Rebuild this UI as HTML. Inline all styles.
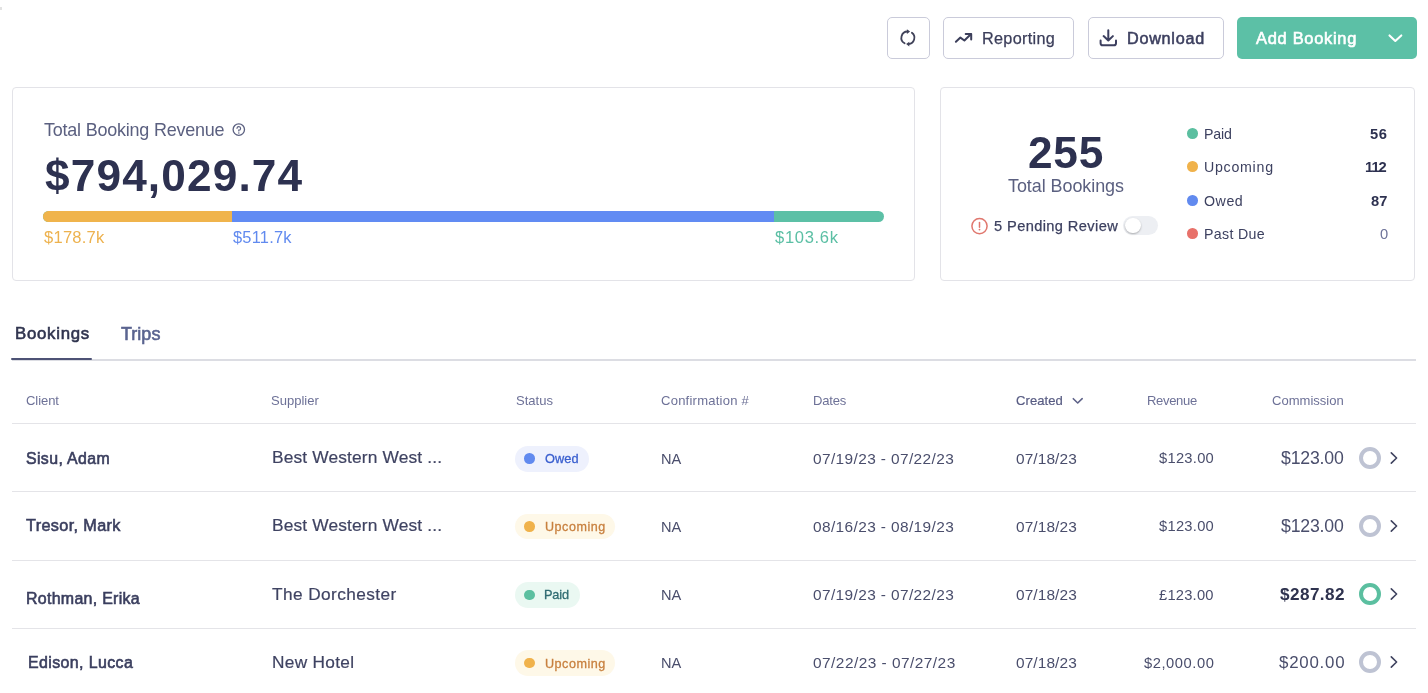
<!DOCTYPE html>
<html><head><meta charset="utf-8"><style>
html,body{margin:0;padding:0;background:#fff;width:1428px;height:693px;overflow:hidden;position:relative}
body{font-family:"Liberation Sans",sans-serif}
.t{position:absolute;white-space:pre;font-family:"Liberation Sans",sans-serif;will-change:transform}
.btn{position:absolute;box-sizing:border-box;border:1.3px solid #CACBDA;border-radius:5px;background:#fff}
.card{position:absolute;box-sizing:border-box;border:1.2px solid #E3E3E8;border-radius:4px;background:#fff}
.dot{position:absolute;border-radius:50%}
.pill{position:absolute;border-radius:13px}
.ring{position:absolute;box-sizing:border-box;width:21.9px;height:21.9px;border-radius:50%;border:4.2px solid #BEC3D3}
.hl{position:absolute;left:12px;width:1404px;height:1px;background:#E4E4E8}
svg{position:absolute;overflow:visible}
</style></head><body>
<div style="position:absolute;left:0;top:7px;width:1.5px;height:3px;background:#E2E2E2"></div>
<div class="btn" style="left:887px;top:17px;width:43px;height:42px"></div>
<svg style="left:896px;top:26px" width="26" height="24" viewBox="0 0 26 24"><g fill="none" stroke="#404259" stroke-width="1.8" stroke-linecap="round"><path d="M8.6 17.3 A6.3 6.3 0 0 1 11.6 5.5"/><path d="M15.9 6.8 A6.3 6.3 0 0 1 12.6 18.1"/></g><path d="M10.9 3.2 L14.1 5.5 L10.9 7.9 Z" fill="#404259"/><path d="M13.3 15.7 L10.1 18.0 L13.3 20.4 Z" fill="#404259"/></svg>
<div class="btn" style="left:943px;top:17px;width:131px;height:42px"></div>
<svg style="left:950px;top:26px" width="30" height="24" viewBox="0 0 30 24"><path d="M5.9 15.8 L10.4 11.6 L14.4 14.5 L20.8 8.3" fill="none" stroke="#3B3E5A" stroke-width="2" stroke-linecap="round" stroke-linejoin="round"/><path d="M15.7 7.9 L21.2 7.9 L21.2 13.4" fill="none" stroke="#3B3E5A" stroke-width="2" stroke-linecap="round" stroke-linejoin="round"/></svg>
<div class="btn" style="left:1088px;top:17px;width:136px;height:42px"></div>
<svg style="left:1095px;top:24px" width="28" height="28" viewBox="0 0 28 28"><path d="M13.3 6.2 L13.3 16.1 M8.6 12.1 L13.3 16.5 L17.9 12.1" fill="none" stroke="#3C3F5F" stroke-width="2" stroke-linecap="round" stroke-linejoin="round"/><path d="M5.6 16.4 L5.6 19.2 Q5.6 21.3 7.7 21.3 L18.9 21.3 Q21 21.3 21 19.2 L21 16.4" fill="none" stroke="#3C3F5F" stroke-width="2" stroke-linecap="round" stroke-linejoin="round"/></svg>
<div style="position:absolute;left:1237px;top:17px;width:180px;height:42px;border-radius:5px;background:#5CC0A6"></div>
<svg style="left:1380px;top:26px" width="30" height="24" viewBox="0 0 30 24"><path d="M9.5 9.4 L15.3 14.9 L21.3 9.4" fill="none" stroke="#fff" stroke-width="2.1" stroke-linecap="round" stroke-linejoin="round"/></svg>

<div class="card" style="left:12px;top:87px;width:903px;height:194px"></div>
<div class="card" style="left:940px;top:87px;width:475px;height:194px"></div>
<svg style="left:232px;top:123px" width="14" height="14" viewBox="0 0 14 14"><circle cx="6.8" cy="6.6" r="5.7" fill="none" stroke="#5B6080" stroke-width="1.3"/><path d="M5.0 5.3 A1.8 1.8 0 1 1 6.8 7.2 L6.8 8.0" fill="none" stroke="#5B6080" stroke-width="1.2" stroke-linecap="round"/><circle cx="6.8" cy="9.9" r="0.75" fill="#5B6080"/></svg>
<div style="position:absolute;left:43px;top:211.2px;width:841px;height:10.5px;border-radius:6px;overflow:hidden;background:#5CC0A6">
<div style="position:absolute;left:0;top:0;width:189px;height:100%;background:#F0B44C"></div>
<div style="position:absolute;left:189px;top:0;width:542px;height:100%;background:#618BF3"></div>
</div>
<svg style="left:970px;top:217px" width="19" height="19" viewBox="0 0 19 19"><circle cx="9.5" cy="9.1" r="7.6" fill="none" stroke="#E0776E" stroke-width="1.5"/><path d="M9.5 5.4 L9.5 10.2" stroke="#E0776E" stroke-width="1.5" stroke-linecap="round"/><circle cx="9.5" cy="12.6" r="0.9" fill="#E0776E"/></svg>
<div style="position:absolute;left:1123.3px;top:215.6px;width:34.5px;height:19px;border-radius:10px;background:#EDEFF3"></div>
<div style="position:absolute;left:1125.2px;top:217.5px;width:15.4px;height:15.4px;border-radius:50%;background:#fff;box-shadow:0 1px 2px rgba(0,0,0,0.28)"></div>

<div style="position:absolute;left:12px;top:358.6px;width:1404px;height:2px;background:#DCDDE3"></div>
<div style="position:absolute;left:11.2px;top:358.1px;width:80.9px;height:2.4px;border-radius:1.2px;background:#4D5275"></div>
<svg style="left:1060px;top:390px" width="30" height="20" viewBox="0 0 30 20"><path d="M13.3 8.7 L17.7 13.0 L22.2 8.7" fill="none" stroke="#5E6288" stroke-width="1.6" stroke-linecap="round" stroke-linejoin="round"/></svg>
<div class="hl" style="top:423px"></div><div class="hl" style="top:491px"></div><div class="hl" style="top:560px"></div><div class="hl" style="top:628px"></div>
<div class="dot" style="left:1186.9px;top:128.0px;width:10.7px;height:10.7px;background:#5BBFA0"></div><div class="dot" style="left:1186.9px;top:161.4px;width:10.7px;height:10.7px;background:#F0B24B"></div><div class="dot" style="left:1186.9px;top:194.9px;width:10.7px;height:10.7px;background:#618AEF"></div><div class="dot" style="left:1186.9px;top:228.2px;width:10.7px;height:10.7px;background:#E8716A"></div><div class="pill" style="left:514.7px;top:446.0px;width:74.4px;height:25.5px;background:#EEF1FD"></div><div class="dot" style="left:524.3px;top:453.4px;width:10.6px;height:10.6px;background:#618AEF"></div><div class="ring" style="left:1358.65px;top:446.95px;border-color:#BEC3D3"></div><svg style="left:1386px;top:447.9px" width="16" height="20" viewBox="0 0 16 20"><path d="M5.3 4.9 L10.6 10 L5.3 15.1" fill="none" stroke="#3F435F" stroke-width="1.6" stroke-linecap="round" stroke-linejoin="round"/></svg><div class="pill" style="left:515.0px;top:513.6px;width:100.0px;height:25.6px;background:#FEF8E8"></div><div class="dot" style="left:524.3px;top:521.1px;width:10.6px;height:10.6px;background:#F0B24B"></div><div class="ring" style="left:1358.65px;top:514.95px;border-color:#BEC3D3"></div><svg style="left:1386px;top:515.9px" width="16" height="20" viewBox="0 0 16 20"><path d="M5.3 4.9 L10.6 10 L5.3 15.1" fill="none" stroke="#3F435F" stroke-width="1.6" stroke-linecap="round" stroke-linejoin="round"/></svg><div class="pill" style="left:515.3px;top:582.0px;width:64.7px;height:25.6px;background:#EAF8F2"></div><div class="dot" style="left:524.3px;top:589.5px;width:10.6px;height:10.6px;background:#5BBFA0"></div><div class="ring" style="left:1358.65px;top:583.25px;border-color:#5BBFA0"></div><svg style="left:1386px;top:584.2px" width="16" height="20" viewBox="0 0 16 20"><path d="M5.3 4.9 L10.6 10 L5.3 15.1" fill="none" stroke="#3F435F" stroke-width="1.6" stroke-linecap="round" stroke-linejoin="round"/></svg><div class="pill" style="left:515.0px;top:650.0px;width:100.0px;height:25.6px;background:#FEF8E8"></div><div class="dot" style="left:524.3px;top:657.5px;width:10.6px;height:10.6px;background:#F0B24B"></div><div class="ring" style="left:1358.65px;top:651.35px;border-color:#BEC3D3"></div><svg style="left:1386px;top:652.3px" width="16" height="20" viewBox="0 0 16 20"><path d="M5.3 4.9 L10.6 10 L5.3 15.1" fill="none" stroke="#3F435F" stroke-width="1.6" stroke-linecap="round" stroke-linejoin="round"/></svg>
<div class="t" style="left:982.10px;top:30px;font-size:16.23px;line-height:16.23px;color:#3B3E5A;letter-spacing:0.315px;-webkit-text-stroke:0.25px #3B3E5A;">Reporting</div><div class="t" style="left:1126.90px;top:30px;font-size:16.23px;line-height:16.23px;color:#3C3F5F;letter-spacing:0.717px;-webkit-text-stroke:0.55px #3C3F5F;">Download</div><div class="t" style="left:1255.50px;top:30px;font-size:16.46px;line-height:16.46px;color:#ffffff;letter-spacing:0.713px;-webkit-text-stroke:0.6px #ffffff;">Add Booking</div><div class="t" style="left:44.20px;top:122px;font-size:17.97px;line-height:17.97px;color:#5B6080;letter-spacing:-0.207px;">Total Booking Revenue</div><div class="t" style="left:45.30px;top:154px;font-size:44.20px;line-height:44.20px;color:#2D3150;font-weight:700;letter-spacing:1.140px;">$794,029.74</div><div class="t" style="left:44.30px;top:230px;font-size:16.57px;line-height:16.57px;color:#EDB24F;letter-spacing:0.232px;">$178.7k</div><div class="t" style="left:233.20px;top:229px;font-size:16.43px;line-height:16.43px;color:#618AEF;letter-spacing:0.205px;">$511.7k</div><div class="t" style="left:775.30px;top:230px;font-size:16.57px;line-height:16.57px;color:#5BBFA4;letter-spacing:0.665px;">$103.6k</div><div class="t" style="left:1028.20px;top:131px;font-size:44.20px;line-height:44.20px;color:#2D3150;font-weight:700;letter-spacing:0.787px;">255</div><div class="t" style="left:1007.60px;top:178px;font-size:17.97px;line-height:17.97px;color:#5B6080;letter-spacing:-0.060px;">Total Bookings</div><div class="t" style="left:993.70px;top:219px;font-size:14.64px;line-height:14.64px;color:#3D4160;letter-spacing:0.392px;-webkit-text-stroke:0.25px #3D4160;">5 Pending Review</div><div class="t" style="left:1204.10px;top:127px;font-size:14.20px;line-height:14.20px;color:#3D4160;letter-spacing:-0.140px;">Paid</div><div class="t" style="left:1370.00px;top:127px;font-size:14.71px;line-height:14.71px;color:#2D3150;font-weight:700;letter-spacing:0.638px;">56</div><div class="t" style="left:1204.10px;top:160px;font-size:14.20px;line-height:14.20px;color:#3D4160;letter-spacing:0.737px;">Upcoming</div><div class="t" style="left:1365.20px;top:160px;font-size:14.71px;line-height:14.71px;color:#2D3150;font-weight:700;letter-spacing:-0.967px;">112</div><div class="t" style="left:1204.10px;top:194px;font-size:14.20px;line-height:14.20px;color:#3D4160;letter-spacing:0.567px;">Owed</div><div class="t" style="left:1370.60px;top:194px;font-size:14.71px;line-height:14.71px;color:#2D3150;font-weight:700;letter-spacing:0.038px;">87</div><div class="t" style="left:1204.10px;top:227px;font-size:14.20px;line-height:14.20px;color:#3D4160;letter-spacing:0.340px;">Past Due</div><div class="t" style="left:1379.70px;top:227px;font-size:14.71px;line-height:14.71px;color:#6E7399;">0</div><div class="t" style="left:14.60px;top:326px;font-size:16.81px;line-height:16.81px;color:#30344F;letter-spacing:0.734px;-webkit-text-stroke:0.6px #30344F;">Bookings</div><div class="t" style="left:120.80px;top:326px;font-size:17.97px;line-height:17.97px;color:#5A6490;letter-spacing:0.033px;-webkit-text-stroke:0.6px #5A6490;">Trips</div><div class="t" style="left:25.90px;top:394px;font-size:13.04px;line-height:13.04px;color:#6D7197;letter-spacing:-0.070px;">Client</div><div class="t" style="left:271.10px;top:394px;font-size:13.04px;line-height:13.04px;color:#6D7197;letter-spacing:0.006px;">Supplier</div><div class="t" style="left:515.60px;top:394px;font-size:13.04px;line-height:13.04px;color:#6D7197;">Status</div><div class="t" style="left:660.80px;top:394px;font-size:13.04px;line-height:13.04px;color:#6D7197;letter-spacing:0.237px;">Confirmation #</div><div class="t" style="left:813.30px;top:394px;font-size:13.04px;line-height:13.04px;color:#6D7197;letter-spacing:-0.167px;">Dates</div><div class="t" style="left:1015.80px;top:394px;font-size:13.04px;line-height:13.04px;color:#585C83;letter-spacing:0.065px;-webkit-text-stroke:0.2px #585C83;">Created</div><div class="t" style="left:1146.80px;top:394px;font-size:13.04px;line-height:13.04px;color:#6D7197;letter-spacing:-0.336px;">Revenue</div><div class="t" style="left:1272.30px;top:394px;font-size:13.04px;line-height:13.04px;color:#6D7197;letter-spacing:0.005px;">Commission</div><div class="t" style="left:26.30px;top:451px;font-size:15.87px;line-height:15.87px;color:#3A3E5E;letter-spacing:0.381px;-webkit-text-stroke:0.6px #3A3E5E;">Sisu, Adam</div><div class="t" style="left:272.00px;top:449px;font-size:17.39px;line-height:17.39px;color:#3F4362;letter-spacing:0.133px;-webkit-text-stroke:0.2px #3F4362;">Best Western West ...</div><div class="t" style="left:544.60px;top:453px;font-size:12.75px;line-height:12.75px;color:#3A5FCF;letter-spacing:0.063px;-webkit-text-stroke:0.3px #3A5FCF;">Owed</div><div class="t" style="left:661.40px;top:452px;font-size:14.60px;line-height:14.60px;color:#4A4E6C;">NA</div><div class="t" style="left:813.40px;top:451px;font-size:15.43px;line-height:15.43px;color:#4A4E6C;letter-spacing:0.387px;">07/19/23 - 07/22/23</div><div class="t" style="left:1015.90px;top:451px;font-size:15.43px;line-height:15.43px;color:#4A4E6C;letter-spacing:0.105px;">07/18/23</div><div class="t" style="left:1159.00px;top:451px;font-size:14.71px;line-height:14.71px;color:#4A4E6C;letter-spacing:0.268px;">$123.00</div><div class="t" style="left:1281.30px;top:450px;font-size:17.71px;line-height:17.71px;color:#4A4E6C;letter-spacing:-0.190px;">$123.00</div><div class="t" style="left:26.10px;top:517px;font-size:16.23px;line-height:16.23px;color:#3A3E5E;letter-spacing:0.361px;-webkit-text-stroke:0.6px #3A3E5E;">Tresor, Mark</div><div class="t" style="left:272.00px;top:517px;font-size:17.39px;line-height:17.39px;color:#3F4362;letter-spacing:0.133px;-webkit-text-stroke:0.2px #3F4362;">Best Western West ...</div><div class="t" style="left:545.00px;top:521px;font-size:12.54px;line-height:12.54px;color:#C8803F;letter-spacing:0.537px;-webkit-text-stroke:0.3px #C8803F;">Upcoming</div><div class="t" style="left:661.40px;top:520px;font-size:14.60px;line-height:14.60px;color:#4A4E6C;">NA</div><div class="t" style="left:813.40px;top:519px;font-size:15.43px;line-height:15.43px;color:#4A4E6C;letter-spacing:0.387px;">08/16/23 - 08/19/23</div><div class="t" style="left:1015.90px;top:519px;font-size:15.43px;line-height:15.43px;color:#4A4E6C;letter-spacing:0.105px;">07/18/23</div><div class="t" style="left:1159.00px;top:519px;font-size:14.71px;line-height:14.71px;color:#4A4E6C;letter-spacing:0.268px;">$123.00</div><div class="t" style="left:1281.30px;top:518px;font-size:17.71px;line-height:17.71px;color:#4A4E6C;letter-spacing:-0.190px;">$123.00</div><div class="t" style="left:26.20px;top:591px;font-size:15.94px;line-height:15.94px;color:#3A3E5E;letter-spacing:0.294px;-webkit-text-stroke:0.6px #3A3E5E;">Rothman, Erika</div><div class="t" style="left:271.70px;top:586px;font-size:17.25px;line-height:17.25px;color:#3F4362;letter-spacing:0.411px;-webkit-text-stroke:0.2px #3F4362;">The Dorchester</div><div class="t" style="left:544.30px;top:589px;font-size:12.75px;line-height:12.75px;color:#2F6B72;letter-spacing:-0.173px;-webkit-text-stroke:0.3px #2F6B72;">Paid</div><div class="t" style="left:661.40px;top:588px;font-size:14.60px;line-height:14.60px;color:#4A4E6C;">NA</div><div class="t" style="left:813.40px;top:587px;font-size:15.43px;line-height:15.43px;color:#4A4E6C;letter-spacing:0.387px;">07/19/23 - 07/22/23</div><div class="t" style="left:1015.90px;top:587px;font-size:15.43px;line-height:15.43px;color:#4A4E6C;letter-spacing:0.105px;">07/18/23</div><div class="t" style="left:1159.30px;top:588px;font-size:14.71px;line-height:14.71px;color:#4A4E6C;letter-spacing:0.218px;">£123.00</div><div class="t" style="left:1279.60px;top:586px;font-size:17.14px;line-height:17.14px;color:#2F334F;font-weight:700;letter-spacing:0.438px;">$287.82</div><div class="t" style="left:28.30px;top:655px;font-size:15.94px;line-height:15.94px;color:#3A3E5E;letter-spacing:0.386px;-webkit-text-stroke:0.6px #3A3E5E;">Edison, Lucca</div><div class="t" style="left:271.95px;top:654px;font-size:17.25px;line-height:17.25px;color:#3F4362;letter-spacing:0.312px;-webkit-text-stroke:0.2px #3F4362;">New Hotel</div><div class="t" style="left:545.00px;top:658px;font-size:12.61px;line-height:12.61px;color:#C8803F;letter-spacing:0.491px;-webkit-text-stroke:0.3px #C8803F;">Upcoming</div><div class="t" style="left:661.40px;top:656px;font-size:14.60px;line-height:14.60px;color:#4A4E6C;">NA</div><div class="t" style="left:813.40px;top:655px;font-size:15.43px;line-height:15.43px;color:#4A4E6C;letter-spacing:0.471px;">07/22/23 - 07/27/23</div><div class="t" style="left:1015.90px;top:655px;font-size:15.43px;line-height:15.43px;color:#4A4E6C;letter-spacing:0.105px;">07/18/23</div><div class="t" style="left:1143.90px;top:656px;font-size:14.71px;line-height:14.71px;color:#4A4E6C;letter-spacing:0.555px;">$2,000.00</div><div class="t" style="left:1278.70px;top:655px;font-size:16.86px;line-height:16.86px;color:#4A4E6C;letter-spacing:0.760px;">$200.00</div>
</body></html>
